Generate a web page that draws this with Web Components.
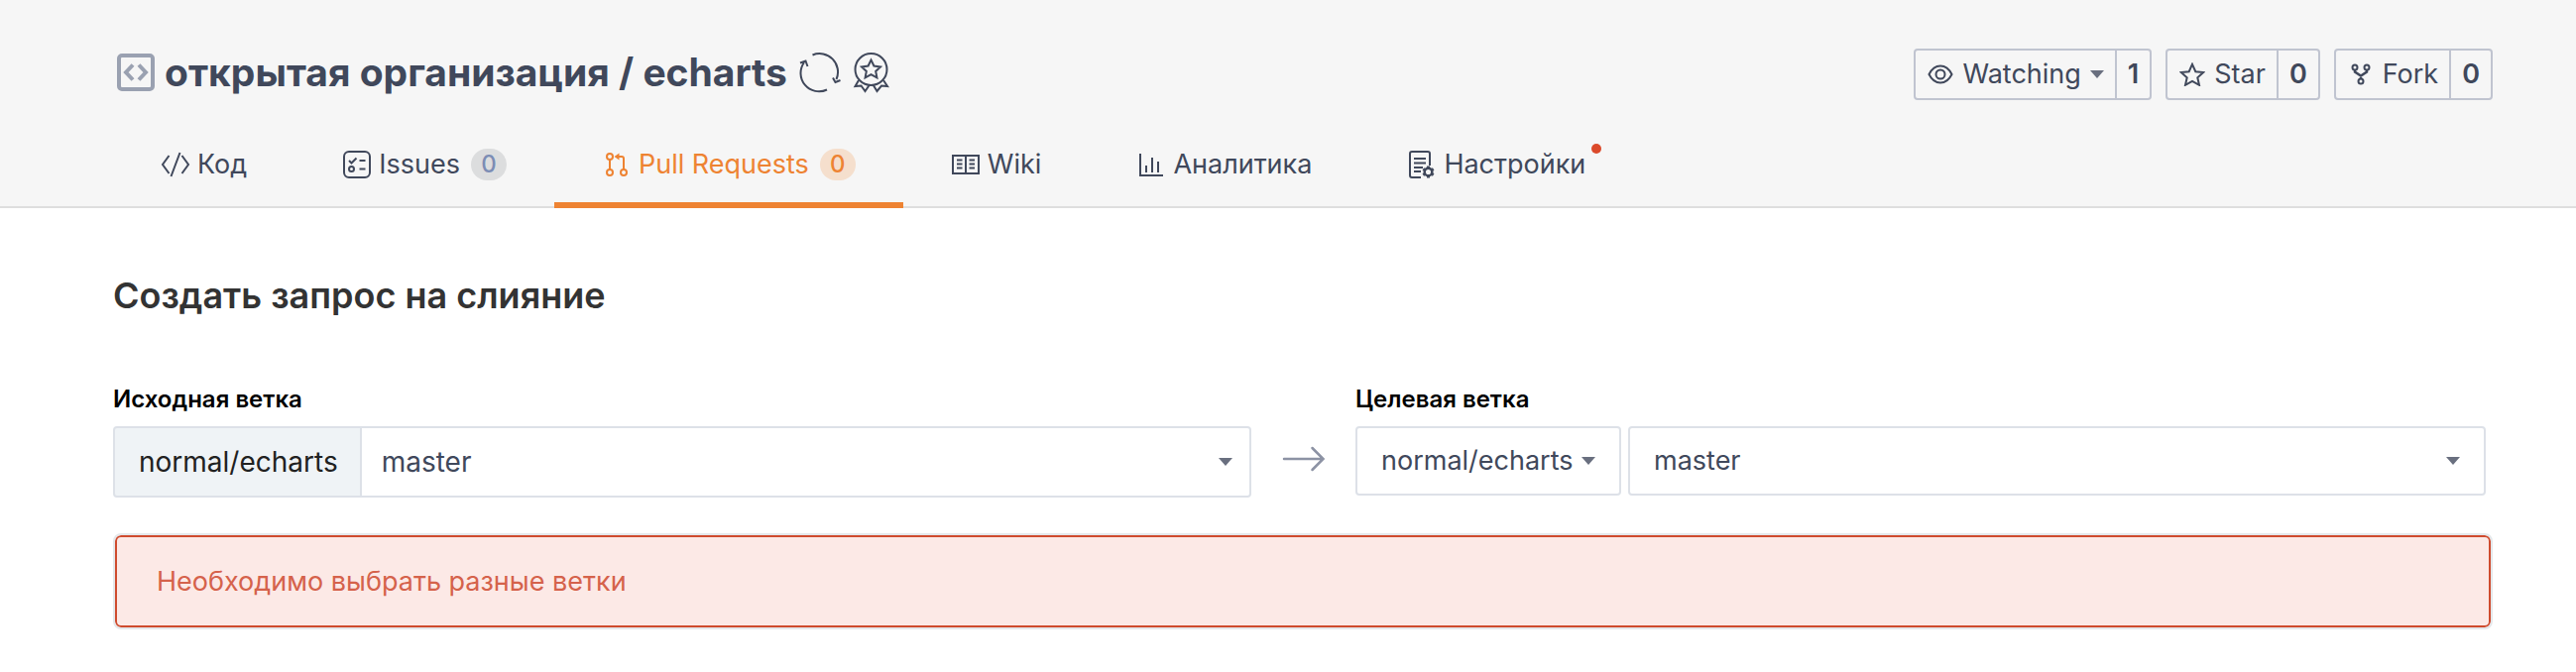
<!DOCTYPE html>
<html lang="ru">
<head>
<meta charset="utf-8">
<title>открытая организация / echarts</title>
<style>
  body { margin: 0; background: #fff; color: #40485b; font: 27px/40px Inter, "Noto Sans", sans-serif; }
</style>
</head>
<body>
<repo-header></repo-header>
<merge-form></merge-form>

<script>
const ICONS = {
  repo: [38, 38, '<rect x="2" y="2" width="34" height="34" rx="3" stroke-width="4"/><path d="M16 11.500l-7 7.500 7 7.500M22 11.500l7 7.500-7 7.500" stroke-width="4"/>'],
  sync: [42, 42, '<path d="M13.500 3.500A18.500 18.500 0 0 1 37.500 28M28 38.500A18.500 18.500 0 0 1 5 11M1 11.500l5.500-2 2 5.500M34 26.500l2.500 4.500 5-2" stroke-width="2"/>'],
  medal: [38, 42, '<circle cx="18.500" cy="18" r="16" stroke-width="2"/><path d="M18.500 8.500l2.900 6 6.600.9-4.800 4.500 1.200 6.500-5.900-3.200-5.900 3.200 1.200-6.500L9 15.400l6.600-.9zM6 29L2.500 35l6-.5 4 5.500 4.500-6.500M31 29l4 6-6-.5-4.500 5.500-4-6.500" stroke-width="2"/>'],
  eye: [26, 20, '<path d="M1.500 10C4 5 8 1.500 13 1.500S22 5 24.500 10C22 15 18 18.500 13 18.500S4 15 1.500 10z" stroke-width="2"/><circle cx="13" cy="10" r="4.500" stroke-width="2"/>'],
  star: [26, 24, '<path d="M13 1.800l3.300 7.400 7.900.8-5.900 5.300 1.700 7.500-7-4-7 4 1.700-7.500L1.800 10l7.900-.8z" stroke-width="2"/>'],
  fork: [20, 22, '<circle cx="4" cy="4" r="2.500" stroke-width="2"/><circle cx="16" cy="4" r="2.500" stroke-width="2"/><circle cx="10" cy="18" r="2.500" stroke-width="2"/><path d="M4 6.500v2l6 4 6-4v-2M10 12v3.500" stroke-width="2.500"/>'],
  code: [30, 28, '<path d="M8.500 5L2 14l6.500 9M21.500 5L28 14l-6.500 9M19.500 2l-9 24" stroke-width="2"/>'],
  issues: [30, 30, '<rect x="2" y="2" width="26" height="26" rx="5" stroke-width="2"/><path d="M7 11l2.500 2.500 5-5M17.500 11h6M17.500 19.500h6" stroke-width="2"/><circle cx="9.500" cy="19.500" r="2.500" stroke-width="2"/>'],
  pull: [24, 26, '<circle cx="5" cy="5" r="3" stroke-width="2"/><circle cx="5" cy="21" r="3" stroke-width="2"/><circle cx="19" cy="21" r="3" stroke-width="2"/><path d="M5 8v10M19 18V7q0-2-2-2h-4" stroke-width="2"/><path d="M9.500 5l5-3.500v7z" fill="currentColor" stroke="none"/>'],
  book: [30, 22, '<path d="M2 2h26v18H2zM15 2v18M6 6.500h5.500M6 10.500h5.500M6 14.500h5.500M18.500 6.500H24M18.500 10.500H24M18.500 14.500H24" stroke-width="2"/>'],
  chart: [26, 26, '<path d="M2 2v22h23M8 14v7M14 6v15M20 10v11" stroke-width="2"/>'],
  settings: [28, 30, '<path d="M13 28H4q-2 0-2-2V4q0-2 2-2h16q2 0 2 2v12M6 9h12M6 13.500h12M6 18h9M6 22h7" stroke-width="2"/><circle cx="20.500" cy="22.500" r="3.800" stroke-width="2.500"/><path d="M20.500 16.500v2M20.500 26.500v2M15.300 19.500l1.700 1M24 24.500l1.700 1M15.300 25.500l1.700-1M24 20.500l1.700-1" stroke-width="3"/>'],
  caret: [14, 8, '<path d="M0 0h14L7 8z" fill="currentColor" stroke="none"/>'],
  arrow: [44, 26, '<path d="M2 13h39M30.500 2L41.500 13 30.500 24" stroke-width="2.500" stroke-linecap="round"/>']
};

function define(name, html, setup) {
  const template = document.createElement('template');
  template.innerHTML = html;
  customElements.define(name, class extends HTMLElement {
    constructor() {
      super();
      this.attachShadow({ mode: 'open' }).append(template.content.cloneNode(true));
    }
    connectedCallback() { if (setup) setup(this, this.shadowRoot); }
  });
}

customElements.define('ui-icon', class extends HTMLElement {
  static observedAttributes = ['name'];
  constructor() {
    super();
    this.attachShadow({ mode: 'open' });
  }
  attributeChangedCallback(attribute, previous, name) {
    const [w, h, body] = ICONS[name];
    this.shadowRoot.innerHTML = `<style>:host{display:inline-flex;flex:none}svg{display:block;flex:none}</style>
      <svg width="${w}" height="${h}" viewBox="0 0 ${w} ${h}" fill="none" stroke="currentColor" aria-hidden="true">${body}</svg>`;
  }
});

define('nav-tab', `
<style>
  :host { display: block; }
  a { position: relative; display: flex; align-items: center; height: 76px; padding: 0 48px; border: 6px solid transparent; border-width: 6px 0; color: inherit; text-decoration: none; }
  ui-icon { width: 30px; justify-content: center; margin-right: 7px; }
  :host([active]) { color: #ee8332; }
  :host([active]) a { border-bottom-color: #ee8332; }
  .badge { margin-left: 11px; min-width: 36px; line-height: 32px; border-radius: 16px; background: #dcddde; color: #7c8db5; text-align: center; font-size: 24px; font-weight: 500; }
  :host([active]) .badge { background: #f5dfcd; color: #ee8332; }
  .dot { position: absolute; top: 17px; right: 32px; width: 10px; height: 10px; border-radius: 50%; background: #db4a2b; }
</style>
<a href="#"><ui-icon></ui-icon><slot></slot></a>`, (el, root) => {
  root.querySelector('ui-icon').setAttribute('name', el.getAttribute('icon'));
  const extra = document.createElement('span');
  if (el.hasAttribute('count')) { extra.className = 'badge'; extra.textContent = el.getAttribute('count'); }
  if (el.hasAttribute('notice')) extra.className = 'dot';
  if (extra.className) root.querySelector('a').append(extra);
});

define('repo-action', `
<style>
  :host { display: flex; height: 48px; border: 2px solid #c0c4d0; border-radius: 4px; }
  button { display: flex; align-items: center; gap: 9px; margin: 0; padding: 0 11px 0 12px; border: 0; background: none; color: inherit; font: inherit; }
  ui-icon { width: 26px; justify-content: center; }
  .caret { width: 14px; color: #696f7f; }
  a { border-left: 2px solid #c0c4d0; padding: 0 11px; color: inherit; font-weight: 600; line-height: 48px; text-decoration: none; }
</style>
<button type="button"><ui-icon></ui-icon><slot></slot></button><a href="#"></a>`, (el, root) => {
  root.querySelector('ui-icon').setAttribute('name', el.getAttribute('icon'));
  root.querySelector('a').textContent = el.getAttribute('count');
  if (el.hasAttribute('menu')) root.querySelector('button').insertAdjacentHTML('beforeend', '<ui-icon class="caret" name="caret"></ui-icon>');
});

define('branch-select', `
<style>
  :host { display: grid; align-items: center; min-width: 0; }
  select { grid-area: 1 / 1; appearance: none; width: 100%; height: var(--select-height, 70px); margin: 0; padding: 0 46px 0 24px; border: 2px solid #dde1e8; border-radius: 4px; background: #fff; color: inherit; font: inherit; }
  :host([joined]) select { padding-left: 20px; border-left: 0; border-radius: 0 4px 4px 0; }
  ui-icon { grid-area: 1 / 1; justify-self: end; margin-right: var(--caret-inset, 26px); color: #696f7f; pointer-events: none; }
</style>
<select><option></option></select><ui-icon name="caret"></ui-icon>`, (el, root) => {
  root.querySelector('option').textContent = el.getAttribute('value');
  root.querySelector('select').setAttribute('aria-label', el.getAttribute('label'));
});

define('alert-box', `
<style>
  :host { display: block; padding: 24px 40px; border: 2px solid #cf4b2e; border-radius: 6px; outline: 2px solid #e4e7ea; background: #fce9e6; color: #d5624b; line-height: 41px; }
</style>
<slot></slot>`);

define('repo-header', `
<style>
  :host { display: block; background: #f6f6f6; border-bottom: 2px solid #dedede; }
  .top { display: flex; align-items: center; justify-content: space-between; padding: 28px 84px 0 118px; height: 94px; }
  .title { display: flex; align-items: center; padding-bottom: 4px; }
  .title > ui-icon:first-child { color: #9aa1b1; }
  h1 { margin: 0 12px 0 10px; font-size: 39px; line-height: 48px; font-weight: 700; }
  h1 a { color: inherit; text-decoration: none; }
  .marks { display: flex; gap: 12px; }
  .actions { display: flex; gap: 14px; }
  nav { display: flex; padding-left: 114px; margin-bottom: -2px; }
</style>
<div class="top">
  <div class="title"><ui-icon name="repo"></ui-icon><h1><a href="#">открытая организация</a> / <a href="#">echarts</a></h1><div class="marks"><ui-icon name="sync"></ui-icon><ui-icon name="medal"></ui-icon></div></div>
  <div class="actions">
    <repo-action icon="eye" count="1" menu>Watching</repo-action>
    <repo-action icon="star" count="0">Star</repo-action>
    <repo-action icon="fork" count="0">Fork</repo-action>
  </div>
</div>
<nav>
  <nav-tab icon="code">Код</nav-tab>
  <nav-tab icon="issues" count="0">Issues</nav-tab>
  <nav-tab icon="pull" count="0" active>Pull Requests</nav-tab>
  <nav-tab icon="book">Wiki</nav-tab>
  <nav-tab icon="chart">Аналитика</nav-tab>
  <nav-tab icon="settings" notice>Настройки</nav-tab>
</nav>`);

define('merge-form', `
<style>
  :host { display: block; padding: 64px 84px 40px 114px; }
  h2 { margin: 0 0 68px; color: #333; font-size: 36px; line-height: 48px; font-weight: 600; }
  .branches { display: grid; grid-template-columns: 1148fr 105px 1140fr; padding-right: 7px; margin-bottom: 38px; }
  h3 { margin: 0 0 14px; color: #000; font-size: 24px; line-height: 26px; font-weight: 600; }
  .source { display: grid; grid-template-columns: auto 1fr; font-size: 28px; --select-height: 72px; --caret-inset: 19px; }
  .source span { box-sizing: border-box; height: 72px; padding: 0 22px 0 24px; border: 2px solid #dde1e8; border-radius: 4px 0 0 4px; background: #eff3f6; color: #212121; line-height: 68px; }
  .target { display: grid; grid-template-columns: auto 1fr; gap: 7px; }
  .arrow { justify-self: center; align-self: end; margin-bottom: 26px; color: #8c92a4; }
  alert-box { margin: 0 2px; }
</style>
<h2>Создать запрос на слияние</h2>
<div class="branches">
  <section><h3>Исходная ветка</h3><div class="source"><span>normal/echarts</span><branch-select joined value="master" label="Исходная ветка"></branch-select></div></section>
  <ui-icon class="arrow" name="arrow"></ui-icon>
  <section><h3>Целевая ветка</h3><div class="target"><branch-select value="normal/echarts" label="Целевой репозиторий"></branch-select><branch-select value="master" label="Целевая ветка"></branch-select></div></section>
</div>
<alert-box role="alert">Необходимо выбрать разные ветки</alert-box>`);
</script>
</body>
</html>
